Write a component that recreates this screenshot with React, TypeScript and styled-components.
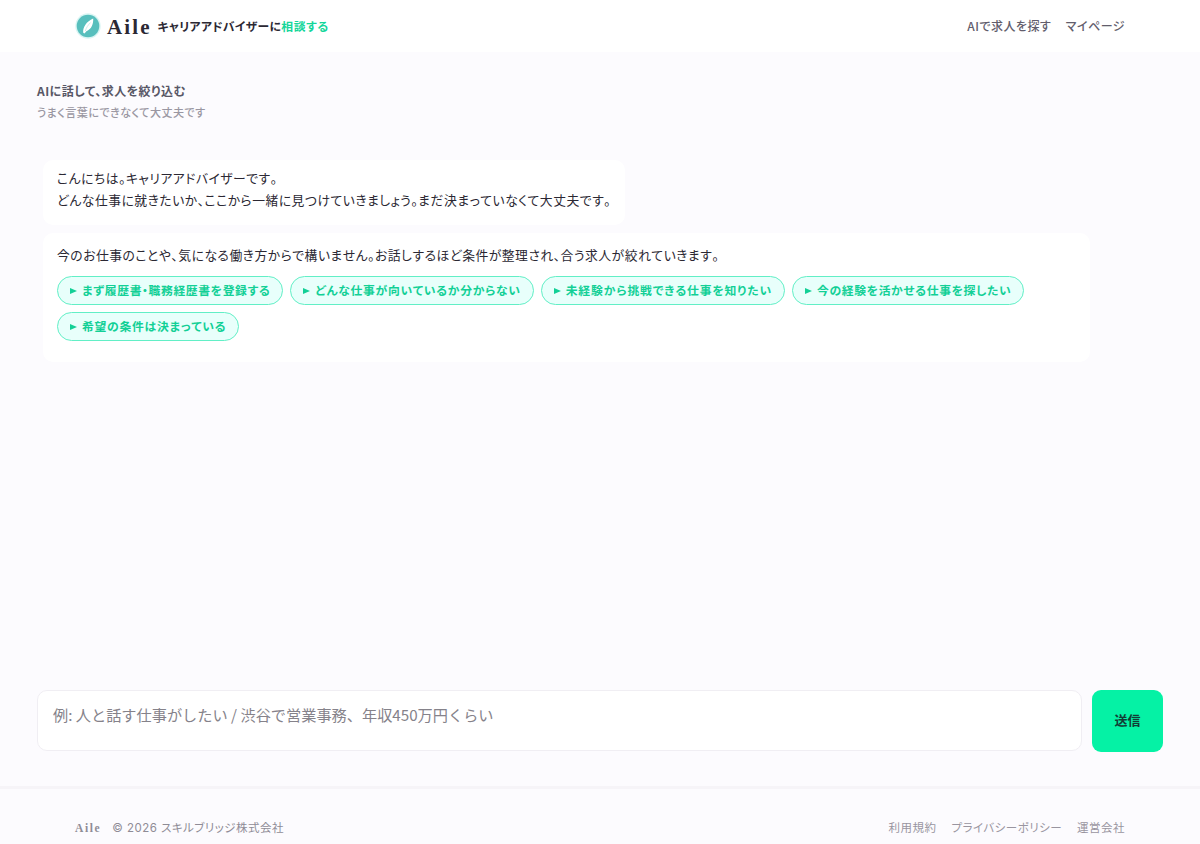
import React from "react";
import styled, { createGlobalStyle } from "styled-components";

const GlobalStyle = createGlobalStyle`
  *, *::before, *::after { box-sizing: border-box; }
  html, body { margin: 0; padding: 0; }
  body {
    background: #fcfbfe;
    color: #2b2833;
    font-family: "Noto Sans CJK JP", sans-serif;
    font-feature-settings: "palt";
    overflow: hidden;
  }
`;

const Page = styled.div`
  display: flex;
  flex-direction: column;
  height: 844px;
  letter-spacing: 0.04em;
`;

const Header = styled.header`
  display: flex;
  align-items: center;
  justify-content: space-between;
  flex: none;
  height: 52px;
  padding: 0 75px;
  background: #fff;
`;

const Brand = styled.div`
  display: flex;
  align-items: center;
`;

const Mark = styled.svg`
  display: block;
  width: 26px;
  height: 26px;
  margin-right: 6px;
`;

const Wordmark = styled.span<{ $small?: boolean }>`
  position: relative;
  top: 1px;
  font-family: "Liberation Serif", serif;
  font-weight: 700;
  font-size: ${(p) => (p.$small ? "11.5px" : "21px")};
  letter-spacing: ${(p) => (p.$small ? "1.6px" : "2.1px")};
  line-height: 1;
`;

const Tagline = styled.span`
  margin-left: 6px;
  font-size: 11.8px;
  font-weight: 700;
  letter-spacing: 0.32px;
  line-height: 20px;
  white-space: nowrap;
`;

const Accent = styled.span`
  letter-spacing: 0.6px;
  color: #15d69a;
`;

const Nav = styled.nav<{ $muted?: boolean }>`
  display: flex;
  gap: ${(p) => (p.$muted ? "15px" : "14.5px")};
  font-size: ${(p) => (p.$muted ? "11.5px" : "12px")};
  font-weight: ${(p) => (p.$muted ? 400 : 500)};
  letter-spacing: 0.48px;
  color: ${(p) => (p.$muted ? "#9995a0" : "#625d6c")};
  line-height: 20px;
`;

const NavLink = styled.a`
  white-space: nowrap;
`;

const Main = styled.main`
  display: flex;
  flex: 1;
  flex-direction: column;
  padding: 28px 37px 34px;
`;

const Title = styled.h1`
  margin: 0;
  font-size: 12px;
  font-weight: 700;
  letter-spacing: 0.48px;
  line-height: 22px;
  color: #585766;
`;

const Subtitle = styled.p`
  margin: 0;
  font-size: 11.1px;
  line-height: 20px;
  letter-spacing: 0.42px;
  font-weight: 500;
  color: #9a97a2;
`;

const Chat = styled.section`
  display: flex;
  flex: 1;
  flex-direction: column;
  align-items: flex-start;
  gap: 8px;
  padding: 38px 0 0 6px;
`;

const Bubble = styled.div<{ $wide?: boolean }>`
  width: ${(p) => (p.$wide ? "1047px" : "auto")};
  padding: ${(p) => (p.$wide ? "11px 14px 21px" : "7px 14px 14px")};
  background: #fff;
  border-radius: 10px;
`;

const Line = styled.p`
  margin: 0;
  font-size: 12.8px;
  font-kerning: none;
  letter-spacing: 0.512px;
  line-height: 22px;
  white-space: nowrap;
`;

const Chips = styled.div`
  display: flex;
  flex-wrap: wrap;
  gap: 7px;
  margin-top: 10px;
`;

const Chip = styled.button<{ $tracking: number }>`
  display: flex;
  align-items: center;
  gap: 5px;
  height: 29px;
  padding: 0 12px;
  border: 1px solid #62efc6;
  border-radius: 15px;
  background: #e8fffb;
  color: #12d096;
  font-family: inherit;
  font-feature-settings: inherit;
  font-size: 11.84px;
  font-weight: 700;
  font-kerning: none;
  letter-spacing: ${(p) => p.$tracking}px;
  line-height: 20px;
  white-space: nowrap;
`;

const ChipLabel = styled.span`
  padding-bottom: 1px;
`;

const Arrow = styled.span`
  width: 0;
  height: 0;
  border-left: 7px solid currentColor;
  border-top: 3.5px solid transparent;
  border-bottom: 3.5px solid transparent;
`;

const Composer = styled.form`
  display: flex;
  gap: 10px;
  height: 62px;
`;

const Input = styled.textarea`
  flex: 1;
  height: 61px;
  padding: 12px 15px;
  border: 1px solid #f0eef3;
  border-radius: 10px;
  background: #fff;
  font-family: "Noto Sans CJK JP", sans-serif;
  font-size: 15.2px;
  line-height: 22px;
  resize: none;
  &::placeholder { color: #85828a; opacity: 1; }
`;

const Send = styled.button`
  width: 71px;
  height: 62px;
  padding: 0 0 3px;
  border: 0;
  border-radius: 9px;
  background: #05f2a5;
  color: #123c36;
  font-family: inherit;
  font-size: 13px;
  font-weight: 700;
`;

const Footer = styled.footer`
  display: flex;
  align-items: center;
  justify-content: space-between;
  flex: none;
  height: 58px;
  padding: 21px 75px 0;
  border-top: 3px solid #f6f4f8;
  color: #8f8c96;
  line-height: 20px;
`;

const Legal = styled.div`
  display: flex;
  align-items: center;
  gap: 11px;
  padding-top: 2px;
  font-family: Inter, "Noto Sans CJK JP", sans-serif;
  font-size: 11.5px;
  letter-spacing: 0.48px;
`;

const chips = [
  { label: "まず履歴書・職務経歴書を登録する", tracking: 0.6 },
  { label: "どんな仕事が向いているか分からない", tracking: 0.67 },
  { label: "未経験から挑戦できる仕事を知りたい", tracking: 0.83 },
  { label: "今の経験を活かせる仕事を探したい", tracking: 0.63 },
  { label: "希望の条件は決まっている", tracking: 0.72 },
];

export default function App() {
  return (
    <Page>
      <GlobalStyle />
      <Header>
        <Brand>
          <Mark viewBox="0 0 26 26" aria-hidden="true">
            <circle cx="13" cy="13" r="12.7" fill="#d9f5f3" />
            <circle cx="13" cy="13" r="11.3" fill="#58bfbd" />
            <path d="M8.2 19.8C7.5 14.5 11.5 8.5 18.2 5.6C18.4 11 16.8 16.3 11.4 18.2L9.5 20.5Z" fill="#fff" />
            <path d="M10.3 18C11.3 14.8 13 12 15.5 9.6" fill="none" stroke="#b9e5e3" strokeWidth="0.7" />
          </Mark>
          <Wordmark>Aile</Wordmark>
          <Tagline>
            キャリアアドバイザーに<Accent>相談する</Accent>
          </Tagline>
        </Brand>
        <Nav>
          <NavLink>AIで求人を探す</NavLink>
          <NavLink>マイページ</NavLink>
        </Nav>
      </Header>
      <Main>
        <Title>AIに話して、求人を絞り込む</Title>
        <Subtitle>うまく言葉にできなくて大丈夫です</Subtitle>
        <Chat>
          <Bubble>
            <Line>こんにちは。キャリアアドバイザーです。</Line>
            <Line>どんな仕事に就きたいか、ここから一緒に見つけていきましょう。まだ決まっていなくて大丈夫です。</Line>
          </Bubble>
          <Bubble $wide>
            <Line>今のお仕事のことや、気になる働き方からで構いません。お話しするほど条件が整理され、合う求人が絞れていきます。</Line>
            <Chips>
              {chips.map((c) => (
                <Chip key={c.label} type="button" $tracking={c.tracking}>
                  <Arrow />
                  <ChipLabel>{c.label}</ChipLabel>
                </Chip>
              ))}
            </Chips>
          </Bubble>
        </Chat>
        <Composer>
          <Input placeholder="例: 人と話す仕事がしたい / 渋谷で営業事務、年収450万円くらい" />
          <Send type="button">送信</Send>
        </Composer>
      </Main>
      <Footer>
        <Legal>
          <Wordmark $small>Aile</Wordmark>
          <span>© 2026 スキルブリッジ株式会社</span>
        </Legal>
        <Nav $muted>
          <NavLink>利用規約</NavLink>
          <NavLink>プライバシーポリシー</NavLink>
          <NavLink>運営会社</NavLink>
        </Nav>
      </Footer>
    </Page>
  );
}
